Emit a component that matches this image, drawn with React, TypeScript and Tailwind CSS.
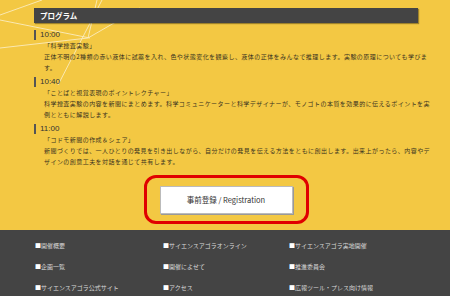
import React from 'react';

const programs = [
  {
    time: '10:00',
    title: '「科学捜査実験」',
    lines: [
      '正体不明の2種類の赤い液体に試薬を入れ、色や状態変化を観察し、液体の正体をみんなで推理します。実験の原理についても学びま',
      'す。',
    ],
  },
  {
    time: '10:40',
    title: '「ことばと視覚表現のポイントレクチャー」',
    lines: [
      '科学捜査実験の内容を新聞にまとめます。科学コミュニケーターと科学デザイナーが、モノゴトの本質を効果的に伝えるポイントを実',
      '例とともに解説します。',
    ],
  },
  {
    time: '11:00',
    title: '「コドモ新聞の作成＆シェア」',
    lines: [
      '新聞づくりでは、一人ひとりの発見を引き出しながら、自分だけの発見を伝える方法をともに創出します。出来上がったら、内容やデ',
      'ザインの創意工夫を対話を通じて共有します。',
    ],
  },
];

const footerLinks = [
  '開催概要',
  'サイエンスアゴラオンライン',
  'サイエンスアゴラ実地開催',
  '企画一覧',
  '開催によせて',
  '推進委員会',
  'サイエンスアゴラ公式サイト',
  'アクセス',
  '広報ツール・プレス向け情報',
];

const jp = { fontFamily: '"Noto Sans CJK JP", "Noto Sans", sans-serif' };

export default function App() {
  return (
    <div className="relative w-[450px] h-[296px] overflow-hidden bg-[#f3c843]" style={jp}>
      {/* decorative lines */}
      <svg className="absolute left-0 top-0" width="140" height="90" viewBox="0 0 140 90">
        <g stroke="#fff" strokeWidth="0.9" opacity="0.65" fill="none">
          <line x1="0" y1="15" x2="42" y2="0" />
          <line x1="0" y1="20" x2="90" y2="38" />
          <line x1="102" y1="0" x2="58" y2="85" />
          <line x1="97" y1="0" x2="88" y2="38" />
          <line x1="88" y1="38" x2="140" y2="8" />
          <line x1="0" y1="48" x2="88" y2="38" />
        </g>
      </svg>

      <div className="relative ml-[34px] w-[384px] pt-[8px]">
        <div className="h-[15px] bg-[#444444] px-[6px] flex items-center shadow-[1px_1px_1px_rgba(0,0,0,0.35)]">
          <span className="text-[7.5px] font-bold text-white leading-none">プログラム</span>
        </div>

        <div className="mt-[7px] flex flex-col gap-[4px]">
          {programs.map((p) => (
            <div key={p.time}>
              <div className="h-[10px] flex items-center border-l-[2px] border-[#555] pl-[4px]">
                <span
                  className="text-[8px] leading-none text-[#333]"
                  style={{ fontFamily: '"Liberation Sans", Arial, sans-serif' }}
                >
                  {p.time}
                </span>
              </div>
              <div className="pl-[10px] text-[6px] leading-[11px] tracking-[0.45px] text-[#3a3320] whitespace-nowrap">
                <div>{p.title}</div>
                {p.lines.map((l, i) => (
                  <div key={i}>{l}</div>
                ))}
              </div>
            </div>
          ))}
        </div>

        <div className="mt-[8px] flex justify-center">
          <div className="w-[165px] h-[49px] rounded-[12px] border-[3px] border-[#e00000] flex items-center justify-center">
            <div className="w-[133px] h-[28px] bg-white border border-[#bbb] shadow-[1px_1px_0_#999] flex items-center justify-center text-[7.5px] text-[#333]">
              事前登録 / Registration
            </div>
          </div>
        </div>
      </div>

      <div className="absolute left-0 right-0 top-[230px] bottom-0 bg-[#444444]">
        <div className="grid grid-cols-[128px_126px_1fr] pl-[35px] pt-[10px] gap-y-[10px]">
          {footerLinks.map((t) => (
            <div key={t} className="text-[6px] leading-[11px] text-[#d8d8d8] whitespace-nowrap">
              <span className="text-white">■</span>
              {t}
            </div>
          ))}
        </div>
      </div>
    </div>
  );
}
